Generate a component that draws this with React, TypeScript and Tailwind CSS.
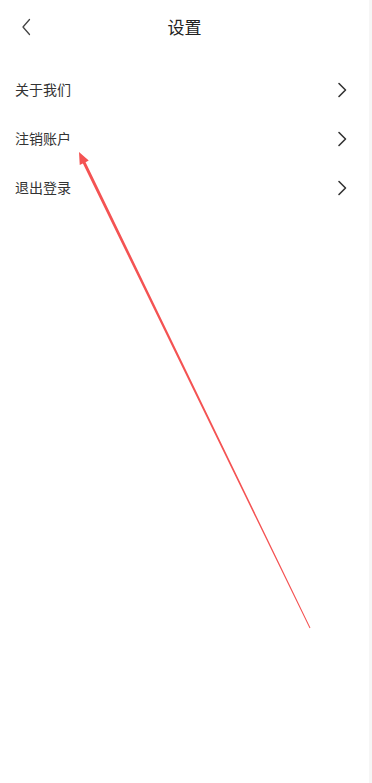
import React from "react";

const Chevron = () => (
  <svg width="10" height="16" viewBox="0 0 10 16" fill="none">
    <path d="M2 1.5 L8.5 8 L2 14.5" stroke="#333" strokeWidth="1.6" strokeLinecap="round" strokeLinejoin="round" />
  </svg>
);

export default function App() {
  const items = ["关于我们", "注销账户", "退出登录"];
  return (
    <div
      className="relative w-[372px] h-[783px] bg-white overflow-hidden flex"
      style={{ fontFamily: '"Noto Sans CJK SC", "Noto Sans", sans-serif' }}
    >
      <div className="flex-1 flex flex-col">
        <div className="relative h-[52px] flex items-center justify-center">
          <div className="absolute left-[20px] top-[18px]">
            <svg width="12" height="18" viewBox="0 0 12 18" fill="none">
              <path d="M9.5 1.5 L3 9 L9.5 16.5" stroke="#444" strokeWidth="1.3" strokeLinecap="round" strokeLinejoin="round" />
            </svg>
          </div>
          <span className="text-[17px] text-[#222] leading-none">设置</span>
        </div>
        <div className="mt-[13px] flex flex-col">
          {items.map((t) => (
            <div key={t} className="h-[49px] flex items-center justify-between pl-[15px] pr-[22px]">
              <span className="text-[14px] text-[#333]">{t}</span>
              <Chevron />
            </div>
          ))}
        </div>
      </div>
      <div className="w-[3px] bg-[#f6f6f6]" />
      <svg className="absolute left-0 top-0" width="372" height="783" viewBox="0 0 372 783">
        <polygon
          points="79,152 88.74,160.6 85.59,162.15 310.45,627.78 309.55,628.22 82.89,163.45 79.74,164.98"
          fill="#f45353"
        />
      </svg>
    </div>
  );
}
